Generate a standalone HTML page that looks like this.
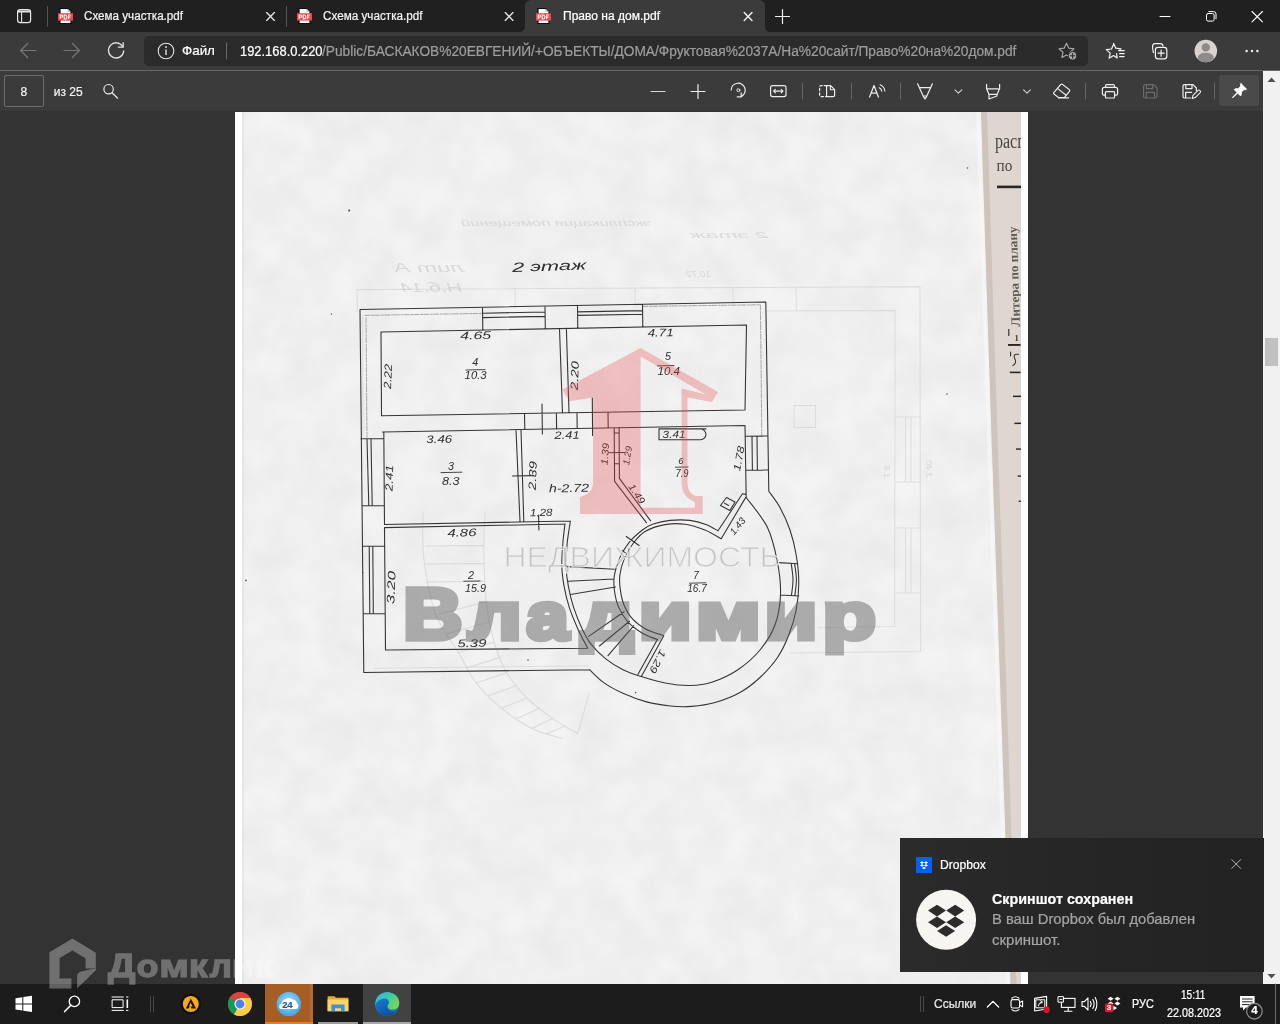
<!DOCTYPE html>
<html lang="ru">
<head>
<meta charset="utf-8">
<title>Право на дом.pdf</title>
<style>
*{box-sizing:border-box;margin:0;padding:0}
html,body{width:1280px;height:1024px;overflow:hidden;background:#333333;font-family:"Liberation Sans",sans-serif;}
#root{position:absolute;left:0;top:0;width:1280px;height:1024px;overflow:hidden;background:#333333}
.abs{position:absolute}
.t{position:absolute;white-space:nowrap;line-height:1;transform-origin:0 50%;color:#fff;-webkit-text-stroke:.22px currentColor}
svg{position:absolute;overflow:visible}
/* ---------- browser chrome ---------- */
#tabbar{left:0;top:0;width:1280px;height:32px;background:#202020}
#navrow{left:0;top:32px;width:1280px;height:39px;background:#3b3b3b;border-bottom:1px solid #686868}
#pdfbar{left:0;top:71px;width:1263px;height:40px;background:#3b3b3b;border-bottom:1px solid #393939}
#acttab{left:525px;top:0;width:240px;height:32px;background:#3b3b3b;border-radius:6px 6px 0 0}
#addr{left:144px;top:36px;width:944px;height:30px;background:#2b2b2b;border-radius:5px}
#vscroll{left:1263px;top:71px;width:17px;height:913px;background:#f1f1f1}
#vthumb{left:1265px;top:338px;width:13px;height:28px;background:#c1c1c1}
/* ---------- page ---------- */
#page{left:235px;top:112px;width:793px;height:872px;background:#ffffff;overflow:hidden}
#scan{left:7px;top:0;width:738px;height:872px;background:#efefef}
#strip{left:745px;top:0;width:41px;height:872px;background:#ddd5cd}
/* ---------- taskbar ---------- */
#taskbar{left:0;top:984px;width:1280px;height:40px;background:#1c1c1c}
/* ---------- toast ---------- */
#toast{left:900px;top:838px;width:364px;height:134px;background:linear-gradient(90deg,#2b2b2b 0%,#262626 45%,#222222 100%)}
</style>
</head>
<body>
<div id="root">

<!-- PDF PAGE -->
<div id="page" class="abs">
</div>
<!--PLANSTART--><svg id="plan" width="793" height="872" viewBox="235 112 793 872" style="left:235px;top:112px;overflow:hidden" fill="none" stroke-linecap="round" stroke-linejoin="round">
<defs>
  <filter id="soft" x="-2%" y="-2%" width="104%" height="104%"><feGaussianBlur stdDeviation="0.35"/></filter>
  <filter id="soft2" x="-2%" y="-2%" width="104%" height="104%"><feGaussianBlur stdDeviation="0.7"/></filter>
  <filter id="paper" x="0" y="0" width="100%" height="100%" color-interpolation-filters="sRGB">
    <feTurbulence type="fractalNoise" baseFrequency="0.028" numOctaves="3" seed="7"/>
    <feColorMatrix type="matrix" values="0.055 0 0 0 0.911  0.055 0 0 0 0.911  0.055 0 0 0 0.911  0 0 0 0 1"/>
  </filter>
  <clipPath id="stripclip"><rect x="975" y="112" width="46" height="872"/></clipPath>
  <linearGradient id="stripg" x1="0" y1="0" x2="1" y2="0">
    <stop offset="0" stop-color="#c9c0b8"/><stop offset="0.12" stop-color="#d8d0c8"/><stop offset="0.3" stop-color="#e2dad2"/><stop offset="1" stop-color="#dcd3ca"/>
  </linearGradient>
</defs>
<!-- paper -->
<rect x="242" y="112" width="779" height="872" fill="#efefef" filter="url(#paper)"/>
<rect x="242.4" y="112" width="1.4" height="872" fill="#dcdcdc" opacity="0.7"/>
<!-- right strip (neighbouring page) -->
<path d="M981 112 L991 420 L1005.4 833 L1010.6 984 L1021 984 L1021 112 Z" fill="#dfd7cf"/>
<path d="M981 112 L991 420 L1005.4 833 L1010.6 984 L1016.6 984 L1011.4 833 L997 420 L987 112 Z" fill="#c7beb6" opacity="0.75" filter="url(#soft2)"/>
<path d="M980 112 L990 420 L1004.4 833 L1009.6 984 L1006 984 L1000.8 833 L986.4 420 L976.4 112 Z" fill="#fafafa" opacity="0.55" filter="url(#soft2)"/>
<g clip-path="url(#stripclip)"><g font-family="Liberation Serif, serif" fill="#3a3632" filter="url(#soft)">
  <text transform="translate(995 147.8) scale(.8 1)" font-size="20" fill="#4a4642">расп</text>
  <text transform="translate(996.6 170.6) scale(.95 1)" font-size="16" fill="#4a4642">по</text>
  <rect x="997" y="185.6" width="24" height="2.6" fill="#2c2826"/>
  <text transform="translate(1020 326.4) rotate(-91.8)" font-size="12.8" font-weight="700" fill="#605b55" textLength="100" lengthAdjust="spacingAndGlyphs">Литера по плану</text>
  <rect x="1008.2" y="329" width="1.2" height="7" fill="#3a3632"/>
  <text x="1014.4" y="341" font-size="8.5" font-weight="700">1</text>
  <rect x="1008" y="344" width="12.6" height="1.9" fill="#2c2826"/>
  <path d="M1018.4 354.4 Q1012.6 353.6 1014.6 358.4 Q1017.4 362.6 1012.8 365.6 M1010.6 352 V356" stroke="#3a3632" stroke-width="1.1" fill="none"/>
  <rect x="1009.8" y="371.6" width="10.8" height="1.6" fill="#2c2826"/>
  <rect x="1013" y="395.6" width="8" height="1.5" fill="#2c2826"/>
  <rect x="1014.4" y="422.6" width="6.6" height="1.5" fill="#2c2826"/>
  <rect x="1016" y="448.4" width="5" height="1.4" fill="#2c2826"/>
  <rect x="1017.6" y="475.4" width="3.4" height="1.4" fill="#2c2826"/>
  <rect x="1018.6" y="500.6" width="2.4" height="1.3" fill="#2c2826"/>
</g></g>
<!-- specks -->
<g fill="#555" filter="url(#soft)">
  <circle cx="349.2" cy="210.6" r="1.1"/><circle cx="331.4" cy="314" r=".7"/><circle cx="967.6" cy="168" r=".7"/><circle cx="947" cy="394" r=".8"/>
  <circle cx="246" cy="580.4" r=".9"/><circle cx="635.6" cy="692.6" r=".8"/><circle cx="528" cy="660" r=".8"/><circle cx="363" cy="572.6" r=".6"/>
</g>

<g stroke="#cfcfcf" stroke-width="1.1" opacity="0.55" filter="url(#soft2)">
<path d="M362.4 316.0 L363.0 436.0 M374.0 668.2 L588.0 665.8 M357.0 289.6 L920.0 286.6 L920.6 651.5 L790.0 653.0 M357.0 289.6 L357.4 312.0 M515.0 288.8 L515.2 308.0 M635.0 288.2 L635.2 306.0 M733.0 287.6 L733.2 304.0 M796.0 287.2 L796.4 311.0 M766.0 311.0 L895.0 310.4 L894.7 626.5 L818.0 627.5 M794.0 405.5 L815.5 405.5 L815.5 427.5 L794.0 427.5 L794.0 405.5 M895.0 417.0 L921.0 417.0 M895.0 482.0 L921.0 482.0 M895.0 528.0 L921.0 528.0 M895.0 593.0 L921.0 593.0 M905.6 417.0 L905.6 482.0 M911.0 417.0 L911.0 482.0 M905.6 528.0 L905.6 593.0 M911.0 528.0 L911.0 593.0"/>
</g>
<path d="M643.0 306.4 L760.4 304.8 L761.8 435.4 M365.0 315.4 L482.0 313.4 M366.0 318.0 L367.0 437.0" stroke="#555" stroke-width="0.8" stroke-dasharray="5 1.6 2 1.2" opacity="0.6" filter="url(#soft)"/>
<path d="M485.0 512.7 C484.8 519.1 483.6 536.0 483.8 550.8 C484.0 565.6 484.6 586.4 486.3 601.6 C488.0 616.8 490.6 630.1 494.0 642.0 C497.4 653.9 501.2 663.4 506.7 672.7 C512.2 682.0 519.4 690.4 527.0 698.0 C534.6 705.6 543.9 712.4 552.4 718.4 C560.9 724.4 573.6 731.2 577.8 733.7 M423.0 512.7 C423.2 520.6 421.8 543.0 424.0 560.0 C426.2 577.0 430.3 599.6 436.0 615.0 C441.7 630.4 451.7 641.1 458.4 652.4 C465.1 663.7 469.0 673.6 476.2 682.9 C483.4 692.2 492.3 700.7 501.6 708.3 C510.9 715.9 521.9 723.5 532.0 728.6 C542.1 733.7 557.4 737.0 562.5 738.7 M577.8 733.7 L589.2 693.0 M486.3 601.6 L436.0 615.0 M490.1 621.8 L447.2 633.7 M494.0 642.0 L458.4 652.4 M500.4 657.4 L467.3 667.6 M506.7 672.7 L476.2 682.9 M516.9 685.4 L488.9 695.6 M527.0 698.0 L501.6 708.3 M539.7 708.2 L516.8 718.5 M552.4 718.4 L532.0 728.6 M565.1 726.0 L547.2 733.7 M426.0 546.0 L484.0 545.4 M426.0 564.0 L484.0 563.4 M426.0 582.0 L484.0 581.4" stroke="#c8c8c8" stroke-width="1.1" opacity="0.5" filter="url(#soft2)"/>
<g stroke="#363636" stroke-width="1.1" filter="url(#soft)">
<path d="M363.8 672.5 L360.0 309.5 L765.8 302.0 L768.8 491.2 M363.8 672.5 L589.7 669.7 M381.5 415.8 L381.0 332.0 L746.5 325.0 L745.0 410.0 M381.5 415.8 L745.0 410.0 M382.5 432.0 L745.0 425.5 M559.5 329.0 L562.5 412.8 M566.4 329.0 L569.0 412.6 M524.5 413.6 L524.8 429.4 M542.0 404.0 L542.4 434.0 M556.4 413.0 L556.6 428.8 M577.0 412.8 L577.2 428.4 M592.3 398.0 L592.6 435.5 M608.0 412.2 L608.2 428.0 M482.5 308.0 L482.8 330.0 M545.0 306.5 L545.3 329.0 M482.6 313.2 L545.0 312.0 M482.6 317.6 L545.0 316.4 M577.5 306.0 L577.8 328.4 M642.5 304.6 L642.8 327.0 M577.6 311.9 L642.6 310.6 M577.6 315.4 L642.6 314.2 M383.8 432.0 L384.5 524.5 M384.5 527.5 L385.5 650.0 L587.6 648.2 M384.5 524.5 L570.4 521.0 M384.5 527.6 L565.0 524.0 M516.0 430.0 L520.0 521.5 M521.0 430.0 L523.8 521.4 M512.5 476.0 L533.8 475.6 M538.6 515.0 L538.9 530.0 M360.8 438.8 L383.8 438.6 M361.8 505.8 L384.3 505.6 M367.0 439.0 L368.8 505.6 M371.0 439.0 L372.2 505.6 M362.3 546.3 L384.8 546.0 M363.0 613.8 L385.2 613.6 M369.2 546.3 L369.8 613.6 M372.8 546.3 L373.3 613.6 M614.2 427.8 L614.6 481.4 L646.4 522.6 M619.1 427.6 L619.4 478.4 L650.6 520.8 M608.8 452.7 L624.4 452.5 M614.4 433.0 L619.2 433.0 M614.6 463.8 L619.4 463.8 M745.0 425.5 L746.2 497.5 M745.4 436.2 L767.6 436.0 M745.8 470.2 L768.2 470.0 M752.0 436.2 L752.4 470.0 M757.0 436.2 L757.4 470.0 M706 428.9 H659 V439.8 H700.5 A5.4 5.4 0 0 0 700.5 429 M768.8 491.2 C770.7 493.9 776.5 501.0 780.0 507.5 C783.5 514.0 787.3 522.1 790.0 530.0 C792.7 537.9 794.7 546.2 796.2 555.0 C797.7 563.8 798.8 573.3 798.8 582.5 C798.8 591.7 797.9 601.2 796.2 610.0 C794.5 618.8 791.9 627.1 788.8 635.0 C785.7 642.9 782.3 650.4 777.5 657.5 C772.7 664.6 766.2 671.7 760.0 677.5 C753.8 683.3 747.5 688.3 740.0 692.5 C732.5 696.7 723.0 700.2 715.0 702.5 C707.0 704.8 699.2 705.8 691.7 706.4 C684.2 707.0 677.8 706.8 670.3 706.0 C662.8 705.2 654.5 704.0 646.6 701.9 C638.7 699.8 630.1 696.5 623.0 693.3 C615.9 690.1 609.2 686.5 603.7 682.6 C598.2 678.7 592.0 671.9 589.7 669.7 M746.2 497.5 C749.8 502.5 762.3 516.7 767.5 527.5 C772.7 538.3 775.3 551.2 777.5 562.5 C779.7 573.8 780.9 584.6 780.5 595.0 C780.1 605.4 778.4 615.8 775.0 625.0 C771.6 634.2 766.2 642.5 760.0 650.0 C753.8 657.5 745.4 664.7 737.5 670.0 C729.6 675.3 720.4 679.4 712.5 682.0 C704.6 684.6 697.9 685.3 690.0 685.5 C682.1 685.7 673.1 684.5 665.0 683.0 C656.9 681.5 648.3 678.7 641.3 676.5 C634.3 674.3 628.9 672.6 623.0 669.7 C617.1 666.8 611.2 663.2 605.8 658.9 C600.4 654.6 594.7 648.9 590.8 643.9 C586.9 638.9 585.1 635.0 582.2 628.9 C579.3 622.8 575.9 614.6 573.6 607.4 C571.3 600.2 569.5 592.7 568.3 585.9 C567.0 579.1 566.3 573.8 566.1 566.6 C565.9 559.5 566.5 550.6 567.2 543.0 C567.9 535.4 569.9 524.7 570.4 521.0 M565.0 523.8 C564.6 527.0 563.4 535.9 562.9 543.0 C562.4 550.1 561.6 559.5 561.8 566.6 C562.0 573.8 562.8 579.1 564.0 585.9 C565.2 592.7 567.0 600.2 569.3 607.4 C571.6 614.6 574.8 622.1 577.9 628.9 C581.0 635.7 586.0 645.0 587.6 648.2 M663.8 635.7 C660.8 634.6 650.8 631.6 645.6 628.9 C640.4 626.1 636.3 623.2 632.7 619.2 C629.1 615.2 626.2 610.0 624.1 605.2 C622.0 600.4 621.1 595.2 620.4 590.2 C619.7 585.2 619.2 580.4 619.8 575.2 C620.4 570.0 622.0 564.3 624.1 559.1 C626.2 553.9 629.2 548.6 632.7 544.0 C636.2 539.4 639.6 534.7 645.0 531.5 C650.4 528.3 658.3 525.8 665.0 524.6 C671.7 523.4 678.3 523.3 685.0 524.2 C691.7 525.1 699.0 527.6 705.0 530.0 C711.0 532.4 718.5 537.3 721.2 538.8 M721.2 538.8 L745.6 497.6 M657.4 639.6 C654.9 638.5 647.2 636.1 642.4 633.2 C637.6 630.3 632.3 626.7 628.4 622.4 C624.5 618.1 621.0 612.8 618.7 607.4 C616.4 602.0 615.1 595.6 614.4 590.2 C613.7 584.8 613.5 580.6 614.4 575.2 C615.3 569.8 617.3 563.5 619.8 558.0 C622.3 552.5 625.7 546.6 629.5 541.9 C633.3 537.2 638.6 533.0 642.4 530.0 C646.2 527.0 647.9 525.8 652.5 524.2 C657.1 522.6 663.8 521.0 670.0 520.4 C676.2 519.8 684.0 519.7 690.0 520.4 C696.0 521.1 701.3 522.7 706.0 524.4 C710.7 526.1 716.0 529.7 718.0 530.8 M718.0 530.8 L742.5 493.8 L746.0 494.4 M663.8 635.7 L641.3 676.5 M657.4 639.6 L638.0 674.2 M567.2 566.6 L614.4 569.2 M568.3 581.2 L614.0 579.0 M570.4 594.5 L615.5 587.0 M588.7 636.4 L624.1 611.7 M599.4 646.0 L629.5 621.3 M608.0 655.7 L633.8 625.6 M626.2 536.5 L639.1 545.5 M621.9 550.5 L625.2 552.6 M778.8 562.6 L797.6 563.8 M781.0 595.0 L798.8 596.0 M791.2 563.4 C791.5 566.2 793.0 574.6 793.0 580.0 C793.0 585.4 791.7 593.0 791.4 595.6 M794.6 563.6 C794.9 566.3 796.4 574.6 796.4 580.0 C796.4 585.4 795.1 593.2 794.8 595.8 M720.5 505.5 L726.5 497.5 L735 502 L729.8 510.5 Z M724.6 503.2 L728.6 505.4"/>
<path d="M466 370 L485 369.6 M657.5 365.9 L674 365.5 M441 472.6 L462 472.2 M675.4 467.2 L688 467 M463.8 581.2 L480 581 M689.6 583.2 L706 582.8" stroke-width="0.9"/>
</g>
<g font-family="Liberation Sans, sans-serif" font-style="italic" fill="#2e2e2e" text-anchor="middle" filter="url(#soft)">
<text x="549" y="270.7" font-size="13.4" textLength="74" lengthAdjust="spacingAndGlyphs" transform="rotate(-2 549 266)">2 этаж</text>
<text x="475.6" y="339.2" font-size="11" textLength="31" lengthAdjust="spacingAndGlyphs" transform="rotate(-1 475.6 335.4)">4.65</text>
<text x="475.2" y="366.1" font-size="10.6" textLength="6" lengthAdjust="spacingAndGlyphs">4</text>
<text x="475.6" y="379.4" font-size="10.4" textLength="22" lengthAdjust="spacingAndGlyphs">10.3</text>
<text x="387.8" y="380.2" font-size="10.6" textLength="25" lengthAdjust="spacingAndGlyphs" transform="rotate(-88 387.8 376.5)">2.22</text>
<text x="574.6" y="379.2" font-size="10.6" textLength="29" lengthAdjust="spacingAndGlyphs" transform="rotate(-88 574.6 375.5)">2.20</text>
<text x="660.6" y="336.3" font-size="10.8" textLength="26" lengthAdjust="spacingAndGlyphs" transform="rotate(-1 660.6 332.5)">4.71</text>
<text x="668" y="359.5" font-size="10.6" textLength="6" lengthAdjust="spacingAndGlyphs">5</text>
<text x="668.8" y="374.6" font-size="10.4" textLength="22.5" lengthAdjust="spacingAndGlyphs">10.4</text>
<text x="439.2" y="442.8" font-size="10.8" textLength="26" lengthAdjust="spacingAndGlyphs" transform="rotate(-1 439.2 439)">3.46</text>
<text x="567" y="438.8" font-size="10.8" textLength="25" lengthAdjust="spacingAndGlyphs" transform="rotate(-1 567 435)">2.41</text>
<text x="451" y="469.7" font-size="10.6" textLength="6" lengthAdjust="spacingAndGlyphs">3</text>
<text x="450.8" y="484.6" font-size="10.4" textLength="17.5" lengthAdjust="spacingAndGlyphs">8.3</text>
<text x="389.2" y="481.7" font-size="10.6" textLength="26" lengthAdjust="spacingAndGlyphs" transform="rotate(-88 389.2 478)">2.41</text>
<text x="532.6" y="479.2" font-size="10.6" textLength="29" lengthAdjust="spacingAndGlyphs" transform="rotate(-88 532.6 475.5)">2.39</text>
<text x="569" y="492.0" font-size="11.4" textLength="40" lengthAdjust="spacingAndGlyphs" transform="rotate(-1 569 488)">h-2.72</text>
<text x="605" y="457.4" font-size="9.6" textLength="22" lengthAdjust="spacingAndGlyphs" transform="rotate(-86 605 454)">1.39</text>
<text x="627.4" y="458.7" font-size="9.2" textLength="19" lengthAdjust="spacingAndGlyphs" transform="rotate(-80 627.4 455.5)">1.29</text>
<text x="674" y="437.8" font-size="10.2" textLength="23" lengthAdjust="spacingAndGlyphs" transform="rotate(-1 674 434.2)">3.41</text>
<text x="681" y="463.9" font-size="9.6" textLength="5.4" lengthAdjust="spacingAndGlyphs">6</text>
<text x="682" y="476.5" font-size="10" textLength="13" lengthAdjust="spacingAndGlyphs">7.9</text>
<text x="738.8" y="462.0" font-size="10" textLength="25" lengthAdjust="spacingAndGlyphs" transform="rotate(-80 738.8 458.5)">1.78</text>
<text x="637" y="497.2" font-size="9.6" textLength="22" lengthAdjust="spacingAndGlyphs" transform="rotate(56 637 493.8)">1.49</text>
<text x="737.5" y="529.4" font-size="9.6" textLength="19" lengthAdjust="spacingAndGlyphs" transform="rotate(-52 737.5 526)">1.43</text>
<text x="541.2" y="516.1" font-size="10.4" textLength="22.5" lengthAdjust="spacingAndGlyphs" transform="rotate(-1 541.2 512.5)">1.28</text>
<text x="461.9" y="536.4" font-size="11" textLength="29" lengthAdjust="spacingAndGlyphs" transform="rotate(-1 461.9 532.5)">4.86</text>
<text x="471" y="578.7" font-size="10.6" textLength="6" lengthAdjust="spacingAndGlyphs">2</text>
<text x="475.6" y="592.4" font-size="10.4" textLength="21" lengthAdjust="spacingAndGlyphs">15.9</text>
<text x="391" y="591.4" font-size="11" textLength="33" lengthAdjust="spacingAndGlyphs" transform="rotate(-88 391 587.5)">3.20</text>
<text x="471.9" y="646.9" font-size="11" textLength="29" lengthAdjust="spacingAndGlyphs" transform="rotate(-1 471.9 643)">5.39</text>
<text x="696" y="579.0" font-size="10" textLength="5.6" lengthAdjust="spacingAndGlyphs">7</text>
<text x="697" y="592.3" font-size="10" textLength="19.5" lengthAdjust="spacingAndGlyphs">16.7</text>
<text x="657.8" y="665.1" font-size="10" textLength="24.5" lengthAdjust="spacingAndGlyphs" transform="rotate(117 657.8 661.6)">1.29</text>
</g>
<g font-family="Liberation Sans, sans-serif" font-style="italic" fill="#cfcfcf" opacity="0.7" filter="url(#soft2)"><text transform="translate(651 226) scale(-1 1)" font-size="9" textLength="190" lengthAdjust="spacingAndGlyphs">экспликация помещений</text><text transform="translate(768 238) scale(-1 1)" font-size="9" textLength="78" lengthAdjust="spacingAndGlyphs">2 этаж</text><text transform="translate(464 272) scale(-1 1)" font-size="12" textLength="70" lengthAdjust="spacingAndGlyphs">лит А</text><text transform="translate(462 292) scale(-1 1)" font-size="12" textLength="62" lengthAdjust="spacingAndGlyphs">Н.б.14</text><text transform="translate(711 277) scale(-1 1)" font-size="9" textLength="25" lengthAdjust="spacingAndGlyphs">10.72</text><text transform="translate(926 478) rotate(90) scale(-1 1)" font-size="9">3.40</text><text transform="translate(884 478) rotate(90) scale(-1 1)" font-size="9">1.8</text></g>
<g id="wm">
  <!-- red 1 / house logo -->
  <path fill="#e8474a" fill-opacity="0.30" fill-rule="evenodd" stroke="none"
   d="M640.6 348 L718.1 392.1 L711.9 401.9 L687.5 397.4 L687.5 484.3 Q688.5 494.5 696.3 496 L702.7 496 L702.7 514 L580 514 L580 497 Q592 494 593.1 484.3 L593.1 397.4 L569.3 401.3 L562.5 389.6 Z
      M640.6 356.4 L706 394.5 L681.6 388.6 L681.6 484.3 Q682.6 497.6 695 502.2 L695 507.7 L640.6 507.7 Z"/>
  <!-- НЕДВИЖИМОСТЬ -->
  <text x="503.5" y="566.6" font-family="Liberation Sans, sans-serif" font-size="28.6" fill="#9a9a9a" fill-opacity="0.5" stroke="#efefef" stroke-width="1.1" stroke-opacity="0.9" paint-order="fill stroke" textLength="277" lengthAdjust="spacingAndGlyphs">НЕДВИЖИМОСТЬ</text>
  <!-- Владимир -->
<g font-family="Liberation Sans, sans-serif" font-weight="700" fill="#5a5a5a" stroke="#5a5a5a" stroke-width="6.0" stroke-linejoin="miter" opacity="0.46" style="paint-order:stroke">
<text vector-effect="non-scaling-stroke" transform="translate(403.35 638.6) scale(1.119 1)" font-size="73">В</text>
<text vector-effect="non-scaling-stroke" transform="translate(468.16 638.6) scale(1.245 1)" font-size="67.4">л</text>
<text vector-effect="non-scaling-stroke" transform="translate(526.80 638.6) scale(1.111 1)" font-size="67.4">а</text>
<text vector-effect="non-scaling-stroke" transform="translate(581.00 638.6) scale(1.228 1)" font-size="67.4">д</text>
<text vector-effect="non-scaling-stroke" transform="translate(638.73 638.6) scale(1.278 1)" font-size="67.4">и</text>
<text vector-effect="non-scaling-stroke" transform="translate(695.82 638.6) scale(1.305 1)" font-size="67.4">м</text>
<text vector-effect="non-scaling-stroke" transform="translate(764.44 638.6) scale(1.276 1)" font-size="67.4">и</text>
<text vector-effect="non-scaling-stroke" transform="translate(822.45 638.6) scale(1.297 1)" font-size="67.4">р</text>
</g>
</g>

</svg>
<!--PLAN-->

<!-- BROWSER CHROME -->
<div id="tabbar" class="abs"></div>
<div id="acttab" class="abs"></div>
<div id="navrow" class="abs"></div>
<div id="addr" class="abs"></div>
<div id="pdfbar" class="abs"></div>
<div id="vscroll" class="abs"></div>
<div id="vthumb" class="abs"></div>
<svg id="chromeicons" width="1280" height="112" viewBox="0 0 1280 112" style="left:0;top:0" fill="none" stroke-linecap="round" stroke-linejoin="round">
  <!-- tab corner flares -->
  <path d="M519 32 Q525 32 525 26 L525 32 Z" fill="#3b3b3b" stroke="none"/>
  <path d="M771 32 Q765 32 765 26 L765 32 Z" fill="#3b3b3b" stroke="none"/>
  <!-- tab actions icon -->
  <rect x="17.6" y="9.6" width="13" height="13" rx="2.6" stroke="#e6e6e6" stroke-width="1.2"/>
  <path d="M21.6 12.4 V22.4" stroke="#e6e6e6" stroke-width="1.1"/>
  <path d="M18.2 11.4 H30" stroke="#e6e6e6" stroke-width="2"/>
  <!-- separators in tab bar -->
  <path d="M47.5 6.5 V26.5 M286.5 6.5 V26.5" stroke="#555" stroke-width="1"/>
  <!-- pdf icons -->
  <defs><g id="pdfi">
    <path d="M2 0.5 H9.6 L13 3.9 V15.5 H2 Z" fill="#fff" stroke="#0a0a0a" stroke-width="1.2" stroke-linejoin="round"/>
    <path d="M9.6 0.5 L13 3.9 H9.6 Z" fill="#c9c9c9" stroke="none"/>
    <rect x="0" y="5.2" width="15" height="7.4" fill="#f04848" stroke="none"/>
    <path d="M2.2 11 V7 H3.6 Q4.7 7 4.7 8.1 Q4.7 9.2 3.6 9.2 H2.2 M6.2 7 V11 H7.3 Q8.9 11 8.9 9 Q8.9 7 7.3 7 Z M10.6 11 V7 H12.8 M10.6 9 H12.4" stroke="#fff" stroke-width="1.05" stroke-linecap="butt" stroke-linejoin="miter"/>
  </g></defs>
  <use href="#pdfi" transform="translate(58,8)"/>
  <use href="#pdfi" transform="translate(297,8)"/>
  <use href="#pdfi" transform="translate(536,8)"/>
  <!-- tab close X -->
  <path d="M266.6 12.6 l7.8 7.8 m0 -7.8 l-7.8 7.8" stroke="#e6e6e6" stroke-width="1.35"/>
  <path d="M505.2 12.6 l7.8 7.8 m0 -7.8 l-7.8 7.8" stroke="#e6e6e6" stroke-width="1.35"/>
  <path d="M744.2 12.6 l7.8 7.8 m0 -7.8 l-7.8 7.8" stroke="#f4f4f4" stroke-width="1.4"/>
  <!-- new tab plus -->
  <path d="M775.5 16.5 h14 M782.5 9.5 v14" stroke="#f0f0f0" stroke-width="1.2"/>
  <!-- window controls -->
  <path d="M1160 16.5 h10" stroke="#fff" stroke-width="1"/>
  <rect x="1206.5" y="13.5" width="7.6" height="7.6" rx="1.6" stroke="#fff" stroke-width="1"/>
  <path d="M1208.8 11.6 H1213.6 Q1216 11.6 1216 14 V18.8" stroke="#fff" stroke-width="1"/>
  <path d="M1252 11.5 l10.4 10.4 m0 -10.4 l-10.4 10.4" stroke="#fff" stroke-width="1.1"/>

  <!-- nav: back / forward / refresh -->
  <path d="M20.6 50.5 H36 M27.6 43.5 L20.6 50.5 L27.6 57.5" stroke="#767676" stroke-width="1.2"/>
  <path d="M64 50.5 H79.4 M72.4 43.5 L79.4 50.5 L72.4 57.5" stroke="#767676" stroke-width="1.2"/>
  <path d="M122.6 46.4 A7.6 7.6 0 1 0 123.7 51" stroke="#e4e4e4" stroke-width="1.3"/>
  <path d="M118.4 47.2 H123.2 V42.6" stroke="#e4e4e4" stroke-width="1.3"/>
  <!-- info icon -->
  <circle cx="166" cy="51" r="7.8" stroke="#e4e4e4" stroke-width="1.1"/>
  <path d="M166 49.6 V55" stroke="#e4e4e4" stroke-width="1.4" stroke-linecap="butt"/>
  <circle cx="166" cy="47" r="0.9" fill="#e4e4e4" stroke="none"/>
  <path d="M226.5 43 V59" stroke="#6a6a6a" stroke-width="1"/>
  <!-- star plus (in address box) -->
  <path d="M1066.5 43.2 l2.2 4.9 5.3 .6 -4 3.6 1.1 5.2 -4.6 -2.6 -4.6 2.6 1.1 -5.2 -4 -3.6 5.3 -.6 Z" stroke="#a8a8a8" stroke-width="1.15"/>
  <circle cx="1072.6" cy="55.8" r="4.3" fill="#a8a8a8" stroke="#2b2b2b" stroke-width="1"/>
  <path d="M1070.4 55.8 h4.4 M1072.6 53.6 v4.4" stroke="#2b2b2b" stroke-width="1.1"/>
  <!-- favorites -->
  <path d="M1113.6 43.4 l2.2 4.8 5.2 .6 -1.4 1.3 M1116.6 53.6 l.6 4.4 -3.6 -2.4 -4.5 2.6 1.1 -5.1 -3.9 -3.5 5.2 -.6 2.1 -4.8" stroke="#f2f2f2" stroke-width="1.2"/>
  <path d="M1118.6 50.6 h5.6 M1119.6 53.6 h4.6 M1119.6 56.6 h4.6" stroke="#f2f2f2" stroke-width="1.2"/>
  <!-- collections -->
  <path d="M1153.4 52.6 Q1152.4 48 1152.6 45.6 Q1153 43.6 1155 43.6 H1160.4 Q1162.8 43.8 1163 46" stroke="#f2f2f2" stroke-width="1.2"/>
  <rect x="1155.4" y="47.4" width="11.4" height="11.4" rx="2.6" stroke="#f2f2f2" stroke-width="1.2"/>
  <path d="M1158 53.1 h6.2 M1161.1 50 v6.2" stroke="#f2f2f2" stroke-width="1.2"/>
  <!-- profile -->
  <circle cx="1205.8" cy="51" r="11.3" fill="#d6d3d0" stroke="none"/>
  <circle cx="1205.8" cy="47.4" r="4.2" fill="#8d8a88" stroke="none"/>
  <path d="M1197.6 58.6 Q1198 52.8 1205.8 52.8 Q1213.6 52.8 1214 58.6 Q1210.6 62.3 1205.8 62.3 Q1201 62.3 1197.6 58.6 Z" fill="#8d8a88" stroke="none"/>
  <!-- more dots -->
  <circle cx="1246.6" cy="51" r="1.2" fill="#f2f2f2" stroke="none"/>
  <circle cx="1252" cy="51" r="1.2" fill="#f2f2f2" stroke="none"/>
  <circle cx="1257.4" cy="51" r="1.2" fill="#f2f2f2" stroke="none"/>

  <!-- pdf toolbar -->
  <rect x="4.5" y="75.5" width="39" height="31" rx="1.5" stroke="#6e6e6e" stroke-width="1"/>
  <circle cx="108.6" cy="89.2" r="4.7" stroke="#ededed" stroke-width="1.2"/>
  <path d="M112 92.8 L117.6 98.2" stroke="#ededed" stroke-width="1.2"/>
  <path d="M651 91.5 h14" stroke="#d6d6d6" stroke-width="1.2"/>
  <path d="M691 91.5 h14 M698 84.5 v14" stroke="#ededed" stroke-width="1.2"/>
  <!-- rotate -->
  <path d="M731.2 90 A7 7 0 1 1 741 96.6" stroke="#ededed" stroke-width="1.2"/>
  <path d="M737.2 96.8 L741.2 96.8 L741.2 92.8" stroke="#ededed" stroke-width="1.2"/>
  <circle cx="738.4" cy="90.2" r="1.5" stroke="#ededed" stroke-width="1"/>
  <!-- fit width -->
  <rect x="770.6" y="85.6" width="15.4" height="11" rx="2" stroke="#ededed" stroke-width="1.2"/>
  <path d="M773.6 91.1 h9.4 M775.4 89.3 l-1.8 1.8 1.8 1.8 M781.2 89.3 l1.8 1.8 -1.8 1.8" stroke="#ededed" stroke-width="1.1"/>
  <!-- separators -->
  <path d="M802.5 83 V99 M851.5 83 V99 M900.5 83 V99 M1085.5 83 V99 M1214.5 83 V99" stroke="#666" stroke-width="1"/>
  <!-- page view -->
  <path d="M826.6 85.6 H830.6 L834.6 89.6 V95.2 Q834.6 96.6 833.2 96.6 H826.6 Z" stroke="#ededed" stroke-width="1.2"/>
  <path d="M830.4 85.8 V89.8 H834.4" stroke="#ededed" stroke-width="1.1"/>
  <path d="M826.6 85.6 H821.2 Q819.6 85.6 819.6 87.2 V95 Q819.6 96.6 821.2 96.6 H826.6" stroke="#ededed" stroke-width="1.2" stroke-dasharray="2.4 2"/>
  <!-- read aloud -->
  <path d="M869.6 97 L874 85.6 L878.4 97 M871.2 93.2 H876.8" stroke="#ededed" stroke-width="1.25"/>
  <path d="M879.2 87.8 Q881.4 88.8 881.8 91.2 M880.2 84.8 Q884.4 86.6 884.8 91" stroke="#ededed" stroke-width="1.1"/>
  <!-- draw -->
  <path d="M917.6 83.8 L923.4 96.6 L925 99 L926.6 96.6 L932.4 83.8 M919.4 87.6 H930.6 M923.6 96 H926.4" stroke="#ededed" stroke-width="1.2"/>
  <path d="M955 89.8 l3.4 3.4 3.4 -3.4" stroke="#d0d0d0" stroke-width="1.1"/>
  <!-- highlight -->
  <path d="M986.6 84.4 V88.8 L989 94.4 V99 L997 96 V94.4 L999.6 88.8 V84.4 M986.6 88.8 H999.6 M989 94.4 H997" stroke="#ededed" stroke-width="1.2"/>
  <path d="M1023.6 89.8 l3.4 3.4 3.4 -3.4" stroke="#d0d0d0" stroke-width="1.1"/>
  <!-- erase -->
  <path d="M1062.8 84.6 L1069.4 89.8 Q1070 90.6 1069.4 91.4 L1064.4 97.6 H1058.6 L1054 94 Q1053.2 93.2 1054 92.4 L1060.6 84.6 Q1061.6 83.8 1062.8 84.6 Z M1057.4 88.4 L1066.2 95.2 M1058.4 97.8 H1068.6" stroke="#ededed" stroke-width="1.2"/>
  <!-- print -->
  <path d="M1105.6 87.4 V85.6 Q1105.6 84.6 1106.6 84.6 H1113.4 Q1114.4 84.6 1114.4 85.6 V87.4 M1105.2 95.2 H1103.8 Q1102.4 95.2 1102.4 93.8 V89.4 Q1102.4 87.4 1104.4 87.4 H1115.6 Q1117.6 87.4 1117.6 89.4 V93.8 Q1117.6 95.2 1116.2 95.2 H1114.8" stroke="#ededed" stroke-width="1.2"/>
  <rect x="1105.4" y="91.6" width="9.2" height="6.4" rx="1" stroke="#ededed" stroke-width="1.2"/>
  <!-- save (disabled) -->
  <path d="M1143.6 86 Q1143.6 84.6 1145 84.6 H1153.6 L1157 88 V96.6 Q1157 98 1155.6 98 H1145 Q1143.6 98 1143.6 96.6 Z M1146.4 84.8 V88.6 H1152.6 V84.8 M1146.2 97.8 V92.4 H1154.4 V97.8" stroke="#6c6c6c" stroke-width="1.15"/>
  <!-- save as -->
  <path d="M1190.6 98 H1184.4 Q1183 98 1183 96.6 V86 Q1183 84.6 1184.4 84.6 H1193 L1196.4 88 V90.4 M1185.8 84.8 V88.6 H1192 V84.8 M1185.6 97.8 V92.4 H1191.6" stroke="#ededed" stroke-width="1.2"/>
  <path d="M1192.2 98.6 L1193 95.4 L1198 90.4 Q1199 89.6 1200 90.6 Q1201 91.6 1200.2 92.6 L1195.2 97.6 Z" stroke="#ededed" stroke-width="1.1"/>
  <!-- pin button -->
  <rect x="1219" y="75" width="40" height="31" rx="3" fill="#4a4a4a" stroke="none"/>
  <path d="M1241 83.6 L1246.6 89.2 Q1245.4 90.2 1244 89.6 L1241.4 92.2 Q1242 94.6 1240.6 96 L1234.2 89.6 Q1235.6 88.2 1238 88.8 L1240.6 86.2 Q1240 84.8 1241 83.6 Z" fill="#fff" stroke="#fff" stroke-width="0.8"/>
  <path d="M1237.2 93 L1232.8 97.4" stroke="#fff" stroke-width="1.3"/>
  <!-- scrollbar arrows -->
  <path d="M1267.5 82 L1271.5 77.6 L1275.5 82 Z" fill="#505050" stroke="none"/>
  <path d="M1267.5 974 L1271.5 978.4 L1275.5 974 Z" fill="#505050" stroke="none" transform="translate(0,0)"/>
</svg>
<div class="t" style="left:84px;top:10px;font-size:12px;transform:scaleX(.970);color:#f2f2f2">Схема участка.pdf</div>
<div class="t" style="left:322.5px;top:10px;font-size:12px;transform:scaleX(.975);color:#f2f2f2">Схема участка.pdf</div>
<div class="t" style="left:562.5px;top:10px;font-size:12px;transform:scaleX(1.002);color:#fff">Право на дом.pdf</div>
<div class="t" style="left:182px;top:44px;font-size:13.4px;transform:scaleX(1.0);color:#fff">Файл</div>
<div class="t" style="left:239.6px;top:43.5px;font-size:14px;transform:scaleX(.922);color:#fff">192.168.0.220</div>
<div class="t" style="left:322.3px;top:43.5px;font-size:14px;transform:scaleX(.9795);color:#9d9d9d">/Public/БАСКАКОВ%20ЕВГЕНИЙ/+ОБЪЕКТЫ/ДОМА/Фруктовая%2037А/На%20сайт/Право%20на%20дом.pdf</div>
<div class="t" style="left:20.6px;top:85.5px;font-size:12px;color:#f2f2f2">8</div>
<div class="t" style="left:53.8px;top:85.5px;font-size:12px;color:#f2f2f2">из 25</div>
<!--CHROME-->

<!-- TASKBAR -->
<div id="taskbar" class="abs"></div>
<div class="abs" style="left:265px;top:984px;width:48px;height:40px;background:#a65e24"></div>
<div class="abs" style="left:310px;top:984px;width:3px;height:38px;background:#b56a2e"></div>
<div class="abs" style="left:265px;top:1022px;width:48px;height:2px;background:#f57a0a"></div>
<div class="abs" style="left:318px;top:1022px;width:40px;height:2px;background:#9c9c9c"></div>
<div class="abs" style="left:363px;top:984px;width:48px;height:40px;background:#424242"></div>
<div class="abs" style="left:363px;top:1022px;width:48px;height:2px;background:#a8a8a8"></div>
<svg id="taskicons" width="1280" height="40" viewBox="0 984 1280 40" style="left:0;top:984px" fill="none" stroke-linecap="round" stroke-linejoin="round">
  <!-- windows logo -->
  <path d="M15.5 998.2 L22.3 997.2 V1003.4 H15.5 Z M23.3 997.1 L32 995.8 V1003.4 H23.3 Z M15.5 1004.4 H22.3 V1010.6 L15.5 1009.6 Z M23.3 1004.4 H32 V1012 L23.3 1010.7 Z" fill="#fff" stroke="none"/>
  <!-- search -->
  <circle cx="74.4" cy="1001.4" r="5.2" stroke="#fff" stroke-width="1.3"/>
  <path d="M70.6 1005.4 L64.6 1011.6" stroke="#fff" stroke-width="1.5"/>
  <!-- task view -->
  <path d="M112 997 H123.4 M112 1010.4 H123.4 M126.4 997 H128 M126.4 1010.4 H128" stroke="#fff" stroke-width="1"/>
  <rect x="112.5" y="999.8" width="10.6" height="7.8" stroke="#fff" stroke-width="1"/>
  <path d="M127.3 999.4 V1008" stroke="#fff" stroke-width="1.6" stroke-linecap="butt"/>
  <!-- separators -->
  <path d="M150.5 996.5 V1012 M153.5 996.5 V1012" stroke="#4a4a4a" stroke-width="1"/>
  <path d="M920.5 996.5 V1011.5 M923.5 996.5 V1011.5" stroke="#4a4a4a" stroke-width="1"/>
  <!-- AIMP -->
  <circle cx="190.8" cy="1004" r="10.3" fill="#0e0e0e" stroke="none"/>
  <circle cx="190.8" cy="1004" r="8" fill="#f5a818" stroke="none"/>
  <path d="M190.8 998.6 L196 1008.4 H191.6 L190.4 1005.8 L188.6 1008.4 H185.8 Z" fill="#1a1208" stroke="none"/>
  <path d="M190.6 1002.6 L192.6 1006.6 H189 Z" fill="#f5a818" stroke="none"/>
  <!-- chrome -->
  <circle cx="240" cy="1004" r="12" fill="#db4437" stroke="none"/>
  <path d="M240 1004 L229.6 998 A12 12 0 0 0 234 1014.4 L240 1004 Z" fill="#0f9d58" stroke="none"/>
  <path d="M240 1004 L234 1014.4 A12 12 0 0 0 250.4 998 H240 Z" fill="#ffcd40" stroke="none"/>
  <path d="M229.6 998 A12 12 0 0 1 250.4 998 H240 Z" fill="#db4437" stroke="none"/>
  <path d="M229.6 998 L235 1007 L240 1004 Z" fill="#0f9d58" stroke="none"/>
  <circle cx="240" cy="1004" r="5.6" fill="#f1f1f1" stroke="none"/>
  <circle cx="240" cy="1004" r="4.4" fill="#4285f4" stroke="none"/>
  <!-- 24 cloud -->
  <circle cx="288.8" cy="1004" r="12" fill="#4fb4ee" stroke="none"/>
  <circle cx="288.8" cy="1004" r="12" fill="url(#g24)" stroke="none"/>
  <path d="M281.6 1009 Q279.2 1009 279.2 1006.4 Q279.2 1004 281.6 1003.6 Q282 999.6 286 999 Q289.4 996.6 292.6 999.4 Q296.4 999.4 296.8 1003 Q298.6 1003.8 298.4 1006 Q298.2 1009 295.4 1009 Z" fill="#fff" stroke="none"/>
  <!-- explorer -->
  <path d="M327.6 996.2 H334.4 L336 997.8 H348.4 V1011.2 H327.6 Z" fill="#e8a92c" stroke="none"/>
  <path d="M327.6 999.4 H348.4 V1011.2 H327.6 Z" fill="#fcd462" stroke="none"/>
  <path d="M331.4 1004.6 H344.6 V1011.2 H341 V1008.2 H335 V1011.2 H331.4 Z" fill="#3f8fe0" stroke="none"/>
  <!-- edge -->
  <circle cx="387.2" cy="1004" r="12" fill="url(#gedge)" stroke="none"/>
  <path d="M375.4 1005 Q376 996 384 993.2 Q391 991.2 396 995.6 Q399.6 999 399.2 1004.4 Q398 1009.4 392.4 1009.4 Q388 1009 387.4 1006.4 Q387.4 1004.8 388.6 1003.6 Q389 999.6 385.4 998.6 Q379.4 998 375.4 1005 Z" fill="url(#gedge2)" stroke="none"/>
  <path d="M375.3 1004.6 Q378.4 998.4 384.8 998.4 Q389.4 999 388.8 1003.4 Q386 1006.6 388.8 1010 Q391.6 1012.6 396 1010.8 Q392.4 1016.4 386 1016 Q376 1015 375.3 1004.6 Z" fill="url(#gedge3)" stroke="none"/>
  <!-- tray chevron -->
  <path d="M987.4 1007 L993 1001.4 L998.6 1007" stroke="#fff" stroke-width="1.3"/>
  <!-- meet now -->
  <rect x="1011" y="999.6" width="8.6" height="8.4" rx="1.8" stroke="#fff" stroke-width="1.1"/>
  <path d="M1019.8 1002.6 L1022.6 1001 V1006.8 L1019.8 1005.2" stroke="#fff" stroke-width="1.1"/>
  <path d="M1011.8 998.2 Q1015.4 995.4 1019 998.2 M1011.8 1009.6 Q1015.4 1012.4 1019 1009.6" stroke="#fff" stroke-width="1.1"/>
  <!-- screen rec -->
  <path d="M1034.6 998.4 L1046.6 996.4 V1009 L1034.6 1011 Z" stroke="#fff" stroke-width="1.1"/>
  <rect x="1036.2" y="999.8" width="8.6" height="8" stroke="#fff" stroke-width="1"/>
  <path d="M1038.4 1005.8 Q1038.4 1002.4 1042 1002 M1040.6 1000.8 L1042.4 1002 L1040.8 1003.6" stroke="#fff" stroke-width="1"/>
  <circle cx="1046.6" cy="1009.8" r="3.2" fill="#e81123" stroke="none"/>
  <!-- network -->
  <rect x="1061.4" y="998.4" width="13.6" height="9" stroke="#fff" stroke-width="1.1" stroke-linejoin="miter"/>
  <path d="M1068.2 1007.4 V1011 M1064.4 1011.2 H1072" stroke="#fff" stroke-width="1.1"/>
  <rect x="1058.4" y="996.6" width="5" height="5.6" fill="#1c1c1c" stroke="#fff" stroke-width="1"/>
  <path d="M1060 999.4 H1062" stroke="#fff" stroke-width="1"/>
  <!-- volume -->
  <path d="M1082 1001.6 H1084.4 L1088 998 V1010 L1084.4 1006.4 H1082 Z" stroke="#fff" stroke-width="1.1"/>
  <path d="M1090.4 1001.4 Q1092 1004 1090.4 1006.6 M1092.8 999.4 Q1095.4 1004 1092.8 1008.6 M1095.2 997.4 Q1098.6 1004 1095.2 1010.6" stroke="#fff" stroke-width="1.1"/>
  <!-- dropbox tray -->
  <path d="M1107.6 998.8 l3 -2 3 2 -3 2 Z M1114.4 998.8 l3 -2 3 2 -3 2 Z M1107.6 1003.6 l3 -2 3 2 -3 2 Z M1114.4 1003.6 l3 -2 3 2 -3 2 Z M1111 1008 l3 -2 3 2 -3 2 Z" fill="#fff" stroke="none"/>
  <rect x="1105" y="1003.6" width="8.4" height="8.6" rx="1.6" fill="#e0192d" stroke="none"/>
  <!-- notifications -->
  <path d="M1240 996 H1254.6 V1007.6 H1246 L1243 1010.6 V1007.6 H1240 Z" fill="#fff" stroke="none"/>
  <path d="M1242.4 999 H1252.2 M1242.4 1001.8 H1252.2 M1242.4 1004.6 H1249" stroke="#1c1c1c" stroke-width="1"/>
  <circle cx="1254.4" cy="1011.2" r="7.8" fill="#1c1c1c" stroke="#8a8a8a" stroke-width="1.3"/>
  <path d="M1275.5 984 V1024" stroke="#6a6a6a" stroke-width="1"/>
  <defs>
    <radialGradient id="g24" cx="0.5" cy="0.4" r="0.6"><stop offset="0" stop-color="#9fdcff"/><stop offset="1" stop-color="#3ea5e6"/></radialGradient>
    <linearGradient id="gedge" x1="0" y1="0" x2="1" y2="1"><stop offset="0" stop-color="#39c5e0"/><stop offset="1" stop-color="#1464b4"/></linearGradient>
    <linearGradient id="gedge2" x1="0" y1="0" x2="1" y2="0.6"><stop offset="0" stop-color="#2fb8e6"/><stop offset="0.6" stop-color="#3fcf9a"/><stop offset="1" stop-color="#7ad84a"/></linearGradient>
    <linearGradient id="gedge3" x1="0" y1="0" x2="0.6" y2="1"><stop offset="0" stop-color="#1b7fd4"/><stop offset="1" stop-color="#0f4f9e"/></linearGradient>
  </defs>
</svg>
<div class="t" style="left:282.3px;top:999.6px;font-size:9.5px;font-weight:700;color:#1b5f98;letter-spacing:-.3px">24</div>
<div class="t" style="left:934px;top:997.8px;font-size:12px;color:#e9e9e9">Ссылки</div>
<div class="t" style="left:1132px;top:997.8px;font-size:12px;transform:scaleX(.905);color:#fff">РУС</div>
<div class="t" style="left:1181.3px;top:988.8px;font-size:12px;transform:scaleX(.835);color:#fff">15:11</div>
<div class="t" style="left:1166.5px;top:1006.6px;font-size:12px;transform:scaleX(.899);color:#fff">22.08.2023</div>
<div class="t" style="left:1107px;top:1004.4px;font-size:7.5px;font-weight:700;color:#fff">3</div>
<div class="t" style="left:1251.2px;top:1005.4px;font-size:11.5px;font-weight:700;color:#fff">4</div>
<!--TASKBAR-->

<!-- TOAST -->
<div id="toast" class="abs"></div>
<svg id="toasticons" width="364" height="134" viewBox="900 838 364 134" style="left:900px;top:838px" fill="none">
  <rect x="916" y="857" width="16" height="16" fill="#0061fe"/>
  <path d="M920 862.6 l2 -1.3 2 1.3 -2 1.3 Z M924 862.6 l2 -1.3 2 1.3 -2 1.3 Z M920 865.4 l2 -1.3 2 1.3 -2 1.3 Z M924 865.4 l2 -1.3 2 1.3 -2 1.3 Z M922 868 l2 -1.3 2 1.3 -2 1.3 Z" fill="#fff"/>
  <circle cx="946.1" cy="919.8" r="30" fill="#f7f5f2"/>
  <path d="M928 910.6 l9 -5.8 9 5.8 -9 5.8 Z M946.2 910.6 l9 -5.8 9 5.8 -9 5.8 Z M928 922.2 l9 -5.8 9 5.8 -9 5.8 Z M946.2 922.2 l9 -5.8 9 5.8 -9 5.8 Z M937.1 931 l9 -5.8 9 5.8 -9 5.8 Z" fill="#2e2c2a"/>
  <path d="M1231.8 859.6 l8.8 8.8 m0 -8.8 l-8.8 8.8" stroke="#b4b4b4" stroke-width="1" stroke-linecap="round"/>
</svg>
<div class="t" style="left:940.3px;top:859px;font-size:12px;transform:scaleX(1.01);color:#fff">Dropbox</div>
<div class="t" style="left:992px;top:890.6px;font-size:15px;font-weight:700;transform:scaleX(.953);color:#fff">Скриншот сохранен</div>
<div class="t" style="left:992px;top:911px;font-size:15px;transform:scaleX(.984);color:#a4a4a4">В ваш Dropbox был добавлен</div>
<div class="t" style="left:992px;top:931.6px;font-size:15px;transform:scaleX(1.0);color:#a4a4a4">скриншот.</div>
<!--TOAST-->
<!--DOMSTART--><svg id="domklik" width="260" height="70" viewBox="40 930 260 70" style="left:40px;top:930px;opacity:.30" fill="none">
  <path d="M90.7 968.4 V955.6 L72.4 944.5 L54.5 955.2 V983.5 H71.4" stroke="#fff" stroke-width="10.2" stroke-linejoin="miter" stroke-miterlimit="6" stroke-linecap="butt"/>
  <path d="M77.1 988.6 V976.6 Q77.1 972.6 81.2 971.6 L95.8 968.2 V970.2 Z" fill="#fff" stroke="none"/>
<g font-family="Liberation Sans, sans-serif" font-weight="700" fill="#fff" stroke="#fff" stroke-width="1.4" stroke-linejoin="miter">
<text vector-effect="non-scaling-stroke" transform="translate(108.10 977.2) scale(1.144 1)" font-size="33.6">Д</text>
<text vector-effect="non-scaling-stroke" transform="translate(136.62 977.2) scale(1.118 1)" font-size="32.2">о</text>
<text vector-effect="non-scaling-stroke" transform="translate(159.29 977.2) scale(1.247 1)" font-size="32.2">м</text>
<text vector-effect="non-scaling-stroke" transform="translate(188.89 977.2) scale(1.146 1)" font-size="32.2">к</text>
<text vector-effect="non-scaling-stroke" transform="translate(209.85 977.2) scale(1.081 1)" font-size="32.2">л</text>
<text vector-effect="non-scaling-stroke" transform="translate(232.01 977.2) scale(1.084 1)" font-size="32.2">и</text>
<text vector-effect="non-scaling-stroke" transform="translate(254.09 977.2) scale(1.249 1)" font-size="32.2">к</text>
</g>
</svg>
<!--DOMEND-->

</div>
</body>
</html>
